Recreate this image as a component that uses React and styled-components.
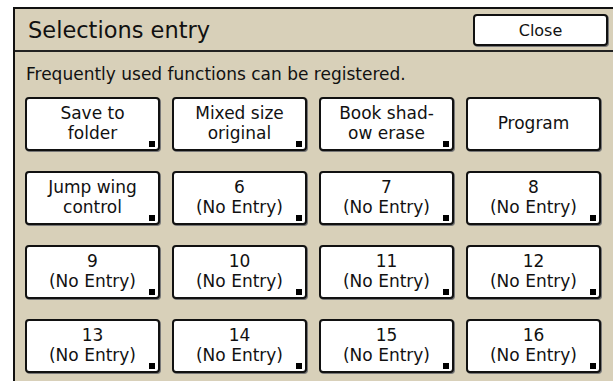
import React from 'react';
import styled, { createGlobalStyle } from 'styled-components';

const GlobalStyle = createGlobalStyle`
    html, body {
        margin: 0;
        padding: 0;
        background: #fff;
        font-family: "DejaVu Sans", Verdana, sans-serif;
        color: #111;
    }
`

const entries = [
    ['Save to', 'folder'],
    ['Mixed size', 'original'],
    ['Book shad-', 'ow erase'],
    ['Program'],
    ['Jump wing', 'control'],
    ['6', '(No Entry)'],
    ['7', '(No Entry)'],
    ['8', '(No Entry)'],
    ['9', '(No Entry)'],
    ['10', '(No Entry)'],
    ['11', '(No Entry)'],
    ['12', '(No Entry)'],
    ['13', '(No Entry)'],
    ['14', '(No Entry)'],
    ['15', '(No Entry)'],
    ['16', '(No Entry)'],
];

export default function App() {
    return (
        <>
            <GlobalStyle />
            <Panel>
                <Header>
                    <Title>Selections entry</Title>
                    <CloseButton type="button">Close</CloseButton>
                </Header>
                <Hint>Frequently used functions can be registered.</Hint>
                <Grid>
                    {entries.map((lines, i) => (
                        <Entry key={i} type="button">
                            {lines.map(line => <span key={line}>{line}</span>)}
                            <Marker hidden={lines.length === 1} />
                        </Entry>
                    ))}
                </Grid>
            </Panel>
        </>
    )
}

const Panel = styled.div`
    margin: 7px 0 0 13px;
    height: 374px;
    box-sizing: border-box;
    background: #d8d0b9;
    border-left: 2px solid #111;
    border-top: 2px solid #111;
`

const Header = styled.div`
    height: 41px;
    display: flex;
    align-items: center;
    justify-content: space-between;
    padding: 0 5px 0 13px;
    border-bottom: 2px solid #222;
`

const Title = styled.div`
    font-size: 22.5px;
    color: #111;
    padding-top: 1px;
`

const CloseButton = styled.button`
    width: 135px;
    height: 32px;
    margin-top: 1px;
    background: #fff;
    border: 2px solid #111;
    border-radius: 4px;
    box-shadow: 1px 1px 0 #777;
    font-family: "DejaVu Sans", Verdana, sans-serif;
    font-size: 16px;
    color: #111;
    padding: 0;
`

const Hint = styled.div`
    font-size: 17px;
    padding: 12px 0 0 11px;
    height: 24px;
`

const Grid = styled.div`
    display: grid;
    grid-template-columns: repeat(4, 135px);
    grid-auto-rows: 54px;
    column-gap: 12px;
    row-gap: 20px;
    padding: 9px 0 0 10px;
`

const Entry = styled.button`
    position: relative;
    display: flex;
    flex-direction: column;
    align-items: center;
    justify-content: center;
    background: #fff;
    border: 2px solid #111;
    border-radius: 4px;
    box-shadow: 1px 1px 0 #777;
    font-family: "DejaVu Sans", Verdana, sans-serif;
    font-size: 17px;
    line-height: 20px;
    color: #111;
    padding: 0 0 3px;

    span {
        display: block;
        white-space: nowrap;
    }
`

const Marker = styled.i`
    position: absolute;
    right: 3px;
    bottom: 2px;
    width: 6px;
    height: 6px;
    background: #000;
    display: ${({hidden}) => hidden ? 'none' : 'block'};
`
